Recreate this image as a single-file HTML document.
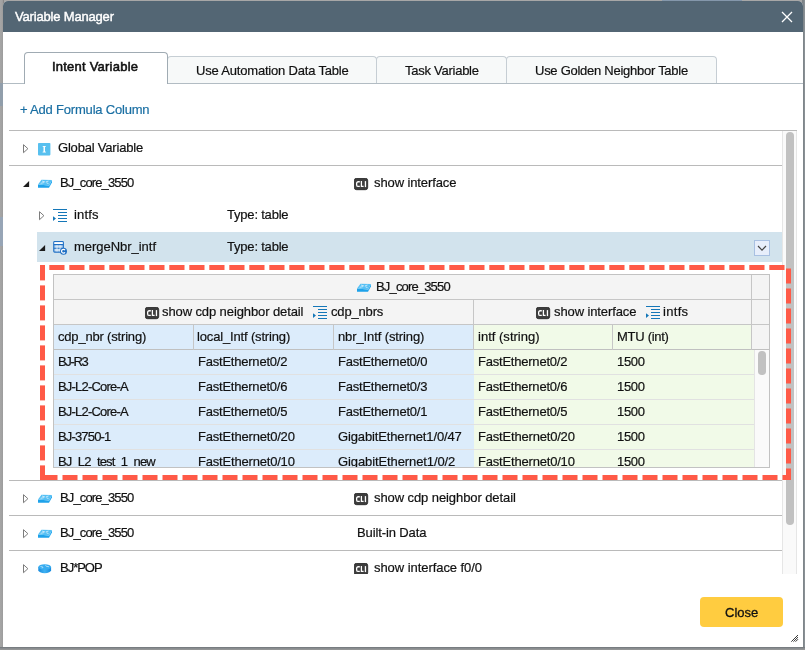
<!DOCTYPE html>
<html><head><meta charset="utf-8"><title>Variable Manager</title>
<style>
html,body{margin:0;padding:0}
body{width:805px;height:650px;overflow:hidden;position:relative;background:#8d9296;font-family:"Liberation Sans", sans-serif;font-size:13px}
.abs{position:absolute;display:block}
.t{position:absolute;white-space:pre;line-height:15px;font-size:13px;font-family:"Liberation Sans", sans-serif;-webkit-text-stroke:0.2px;will-change:transform}
.bgl{left:0;top:0;width:4px;height:650px;background:linear-gradient(90deg,#a6a6a6,#a0a0a0 60%,#7d7d7d)}
.bgb{left:0;top:647px;width:805px;height:3px;background:linear-gradient(180deg,#6e7478 0,#868a8d 40%,#9a9a9a 100%)}
.bgr{left:802px;top:0;width:3px;height:650px;background:linear-gradient(90deg,#787f84,#7f868b 50%,#8f9599)}
.bgt{left:0;top:0;width:805px;height:2px;background:#a7a7a7}
.dlg{left:3px;top:1px;width:800px;height:646px;background:#fff;border-radius:5px 5px 0 0;overflow:hidden}
.hdr{left:0;top:0;width:800px;height:30.5px;background:#536674}
.tabline{left:3px;top:83px;width:800px;height:1px;background:#b2bcc3}
.tab{top:56px;height:27px;background:#f7f9f9;border:1px solid #c6ced4;border-bottom:none;border-radius:4px 4px 0 0;box-sizing:border-box}
.tab.act{top:52px;height:32px;background:#fff;border-color:#a0abb3}
.hl{left:9px;height:1px;background:#bababa;width:773px}
.sel{left:37px;top:232px;width:745px;height:30px;background:#d2e3ed}
.track{left:782px;top:131px;width:15px;height:443px;background:#fafafa;box-sizing:border-box;border-left:1px solid #e6e6e6;border-right:1px solid #e6e6e6}
.thumb{left:786px;top:132px;width:8px;height:393px;background:#c1c1c1;border-radius:4px}
.btn{left:700px;top:597px;width:83px;height:30px;background:#ffcc40;border-radius:4px}
.dd{left:754px;top:240px;width:16px;height:16px;box-sizing:border-box;background:#e7eefb;border:1px solid #a8c0e2}
.clip{left:54px;top:450px;width:715px;height:17px;overflow:hidden}
.clip2{left:9px;top:551px;width:773px;height:23px;overflow:hidden}
/* table */
.tb{left:53px;top:274px;width:717px;height:194px;box-sizing:border-box;border:1px solid #c2c2c2;background:#f4f4f4;overflow:hidden}
</style></head>
<body>
<div class="abs bgt"></div><div class="abs" style="left:662px;top:0;width:80px;height:1px;background:#8497ab"></div><div class="abs bgl"></div><div class="abs" style="left:0;top:83px;width:3px;height:23px;background:#919eab"></div><div class="abs" style="left:0;top:217px;width:3px;height:29px;background:#97a5b6"></div><div class="abs bgr"></div><div class="abs bgb"></div>
<div class="abs dlg"><div class="abs hdr"></div></div>
<svg class="abs" style="left:781px;top:11px" width="12" height="12" viewBox="0 0 12 12"><path d="M1 1 L11 11 M11 1 L1 11" stroke="#fff" stroke-width="1.3" fill="none"/></svg>

<div class="abs tabline"></div>
<div class="abs tab" style="left:167px;width:210px"></div>
<div class="abs tab" style="left:376px;width:131px"></div>
<div class="abs tab" style="left:506px;width:211px"></div>
<div class="abs tab act" style="left:24px;width:144px"></div>

<div class="abs hl" style="top:130px;width:788px"></div>
<div class="abs hl" style="top:165px"></div>
<div class="abs sel"></div>
<div class="abs hl" style="top:480px"></div>
<div class="abs hl" style="top:515px"></div>
<div class="abs hl" style="top:550px"></div>
<div class="abs dd"><svg class="abs" style="left:2px;top:4px" width="10" height="7" viewBox="0 0 10 7"><path d="M1 1 L5 5.2 L9 1" fill="none" stroke="#444" stroke-width="1.15"/></svg></div>

<!-- inner table -->
<div class="abs tb">
  <div class="abs" style="left:0;top:24px;width:715px;height:1px;background:#c6c6c6"></div>
  <div class="abs" style="left:0;top:49px;width:715px;height:1px;background:#c6c6c6"></div>
  <div class="abs" style="left:0;top:50px;width:420px;height:143px;background:#dcecfb"></div>
  <div class="abs" style="left:420px;top:50px;width:277px;height:25px;background:#f1fae8"></div>
  <div class="abs" style="left:420px;top:75px;width:280px;height:118px;background:#f1fae8"></div>
  <div class="abs" style="left:700px;top:75px;width:15px;height:118px;background:#fafafa;border-left:1px solid #e4e4e4"></div>
  <div class="abs" style="left:0;top:74px;width:715px;height:1px;background:#c0c0c0"></div>
  <div class="abs" style="left:0;top:99px;width:700px;height:1px;background:#e1e1e1"></div>
  <div class="abs" style="left:0;top:124px;width:700px;height:1px;background:#e1e1e1"></div>
  <div class="abs" style="left:0;top:149px;width:700px;height:1px;background:#e1e1e1"></div>
  <div class="abs" style="left:0;top:174px;width:700px;height:1px;background:#e1e1e1"></div>
  <div class="abs" style="left:139px;top:50px;width:1px;height:25px;background:#c6c6c6"></div>
  <div class="abs" style="left:279px;top:50px;width:1px;height:25px;background:#c6c6c6"></div>
  <div class="abs" style="left:419px;top:25px;width:1px;height:50px;background:#c6c6c6"></div>
  <div class="abs" style="left:558px;top:50px;width:1px;height:25px;background:#c6c6c6"></div>
  <div class="abs" style="left:697px;top:0;width:1px;height:75px;background:#c6c6c6"></div>
  <div class="abs" style="left:704px;top:76px;width:7.6px;height:24px;background:#c1c1c1;border-radius:3.8px"></div>
</div>
<svg class='abs' style='left:355.8px;top:282.8px' width='16' height='10' viewBox='0 0 16 10'><path d='M1 5.4 L12 6.4 L12 8.8 L1 8.7 Z' fill='#1ea2ea'/><path d='M12 6.4 L15 1 L15 3.4 L12 8.8 Z' fill='#2aaaef'/><path d='M4.5 0.7 L15 1 L12 6.4 L1 5.4 Z' fill='#56c0f4'/><path d='M5 2 L8 3 M11.5 2 L8.8 3 M3.6 4.3 L7 3.6 M9.5 3.8 L11.5 4.6' stroke='#cdebfb' stroke-width='0.9'/></svg><svg class='abs' style='left:145px;top:306.8px' width='15' height='13' viewBox='0 0 15 13'><rect x='0.3' y='0.3' width='13.4' height='11.4' rx='2.3' fill='#3d3d3d' stroke='#1e1e1e' stroke-width='0.8'/><g fill='none' stroke='#fff' stroke-width='1.3'><path d='M5.8 3.75 H4.3 Q2.65 3.75 2.65 5.3 V6.9 Q2.65 8.45 4.3 8.45 H5.8'/><path d='M7.4 3.1 V8.45 H9.6'/><path d='M11.45 3.1 V9.1'/></g></svg><svg class='abs' style='left:313px;top:306px' width='15' height='14' viewBox='0 0 15 14' shape-rendering='crispEdges'><g fill='#1577b8'><rect x='0' y='0' width='14' height='1'/><rect x='5' y='3' width='9' height='1'/><rect x='5' y='6' width='9' height='1'/><rect x='5' y='9' width='9' height='1'/><rect x='5' y='12' width='9' height='1'/></g><path d='M0 7.2 L3 9.5 L0 11.9 Z' fill='#1577b8' shape-rendering='auto'/></svg><svg class='abs' style='left:536px;top:306.8px' width='15' height='13' viewBox='0 0 15 13'><rect x='0.3' y='0.3' width='13.4' height='11.4' rx='2.3' fill='#3d3d3d' stroke='#1e1e1e' stroke-width='0.8'/><g fill='none' stroke='#fff' stroke-width='1.3'><path d='M5.8 3.75 H4.3 Q2.65 3.75 2.65 5.3 V6.9 Q2.65 8.45 4.3 8.45 H5.8'/><path d='M7.4 3.1 V8.45 H9.6'/><path d='M11.45 3.1 V9.1'/></g></svg><svg class='abs' style='left:646px;top:306px' width='15' height='14' viewBox='0 0 15 14' shape-rendering='crispEdges'><g fill='#1577b8'><rect x='0' y='0' width='14' height='1'/><rect x='5' y='3' width='9' height='1'/><rect x='5' y='6' width='9' height='1'/><rect x='5' y='9' width='9' height='1'/><rect x='5' y='12' width='9' height='1'/></g><path d='M0 7.2 L3 9.5 L0 11.9 Z' fill='#1577b8' shape-rendering='auto'/></svg>
<span class='t' style='left:15.0px;top:9.0px;letter-spacing:-0.179px;color:#ffffff;-webkit-text-stroke:0.4px;'>Variable Manager</span>
<span class='t' style='left:52.2px;top:59.0px;letter-spacing:0.222px;color:#111;-webkit-text-stroke:0.55px;'>Intent Variable</span>
<span class='t' style='left:195.6px;top:62.8px;letter-spacing:-0.189px;color:#111111;'>Use Automation Data Table</span>
<span class='t' style='left:404.5px;top:62.8px;letter-spacing:-0.260px;color:#111111;'>Task Variable</span>
<span class='t' style='left:534.5px;top:62.8px;letter-spacing:-0.263px;color:#111111;'>Use Golden Neighbor Table</span>
<span class='t' style='left:20.3px;top:101.8px;letter-spacing:-0.196px;color:#1a6fa3;'>+ Add Formula Column</span>
<span class='t' style='left:57.6px;top:140.4px;letter-spacing:-0.201px;color:#111111;'>Global Variable</span>
<span class='t' style='left:60.1px;top:174.8px;letter-spacing:-0.870px;color:#111111;'>BJ_core_3550</span>
<span class='t' style='left:374.0px;top:175.2px;letter-spacing:-0.102px;color:#111111;'>show interface</span>
<span class='t' style='left:73.7px;top:207.0px;letter-spacing:0.191px;color:#111111;'>intfs</span>
<span class='t' style='left:226.5px;top:206.8px;letter-spacing:-0.201px;color:#111111;'>Type: table</span>
<span class='t' style='left:73.7px;top:238.6px;letter-spacing:-0.029px;color:#111111;'>mergeNbr_intf</span>
<span class='t' style='left:226.5px;top:238.5px;letter-spacing:-0.201px;color:#111111;'>Type: table</span>
<span class='t' style='left:375.6px;top:278.8px;letter-spacing:-0.837px;color:#111111;'>BJ_core_3550</span>
<span class='t' style='left:161.8px;top:304.0px;letter-spacing:-0.101px;color:#111111;'>show cdp neighbor detail</span>
<span class='t' style='left:330.5px;top:304.0px;letter-spacing:-0.161px;color:#111111;'>cdp_nbrs</span>
<span class='t' style='left:553.7px;top:304.0px;letter-spacing:-0.102px;color:#111111;'>show interface</span>
<span class='t' style='left:663.4px;top:304.0px;letter-spacing:0.311px;color:#111111;'>intfs</span>
<span class='t' style='left:57.8px;top:329.0px;letter-spacing:-0.184px;color:#111111;'>cdp_nbr (string)</span>
<span class='t' style='left:197.3px;top:329.0px;letter-spacing:-0.158px;color:#111111;'>local_Intf (string)</span>
<span class='t' style='left:337.9px;top:329.0px;letter-spacing:-0.109px;color:#111111;'>nbr_Intf (string)</span>
<span class='t' style='left:477.7px;top:329.0px;letter-spacing:0.015px;color:#111111;'>intf (string)</span>
<span class='t' style='left:617.1px;top:329.0px;letter-spacing:-0.286px;color:#111111;'>MTU (int)</span>
<span class='t' style='left:57.8px;top:353.8px;letter-spacing:-1.345px;color:#111111;'>BJ-R3</span>
<span class='t' style='left:197.7px;top:353.8px;letter-spacing:-0.220px;color:#111111;'>FastEthernet0/2</span>
<span class='t' style='left:337.7px;top:353.8px;letter-spacing:-0.220px;color:#111111;'>FastEthernet0/0</span>
<span class='t' style='left:477.5px;top:353.8px;letter-spacing:-0.220px;color:#111111;'>FastEthernet0/2</span>
<span class='t' style='left:616.5px;top:353.8px;letter-spacing:-0.330px;color:#111111;'>1500</span>
<span class='t' style='left:57.8px;top:378.8px;letter-spacing:-0.806px;color:#111111;'>BJ-L2-Core-A</span>
<span class='t' style='left:197.7px;top:378.8px;letter-spacing:-0.220px;color:#111111;'>FastEthernet0/6</span>
<span class='t' style='left:337.7px;top:378.8px;letter-spacing:-0.220px;color:#111111;'>FastEthernet0/3</span>
<span class='t' style='left:477.5px;top:378.8px;letter-spacing:-0.220px;color:#111111;'>FastEthernet0/6</span>
<span class='t' style='left:616.5px;top:378.8px;letter-spacing:-0.330px;color:#111111;'>1500</span>
<span class='t' style='left:57.8px;top:403.8px;letter-spacing:-0.806px;color:#111111;'>BJ-L2-Core-A</span>
<span class='t' style='left:197.7px;top:403.8px;letter-spacing:-0.220px;color:#111111;'>FastEthernet0/5</span>
<span class='t' style='left:337.7px;top:403.8px;letter-spacing:-0.220px;color:#111111;'>FastEthernet0/1</span>
<span class='t' style='left:477.5px;top:403.8px;letter-spacing:-0.220px;color:#111111;'>FastEthernet0/5</span>
<span class='t' style='left:616.5px;top:403.8px;letter-spacing:-0.330px;color:#111111;'>1500</span>
<span class='t' style='left:57.8px;top:428.8px;letter-spacing:-0.843px;color:#111111;'>BJ-3750-1</span>
<span class='t' style='left:197.7px;top:428.8px;letter-spacing:-0.190px;color:#111111;'>FastEthernet0/20</span>
<span class='t' style='left:337.7px;top:428.8px;letter-spacing:-0.133px;color:#111111;'>GigabitEthernet1/0/47</span>
<span class='t' style='left:477.5px;top:428.8px;letter-spacing:-0.190px;color:#111111;'>FastEthernet0/20</span>
<span class='t' style='left:616.5px;top:428.8px;letter-spacing:-0.330px;color:#111111;'>1500</span>
<span class='t' style='left:60.1px;top:490.0px;letter-spacing:-0.870px;color:#111111;'>BJ_core_3550</span>
<span class='t' style='left:374.0px;top:490.0px;letter-spacing:-0.085px;color:#111111;'>show cdp neighbor detail</span>
<span class='t' style='left:60.1px;top:525.0px;letter-spacing:-0.870px;color:#111111;'>BJ_core_3550</span>
<span class='t' style='left:357.3px;top:525.0px;letter-spacing:-0.116px;color:#111111;'>Built-in Data</span>
<svg class='abs' style='left:23px;top:143.8px' width='7' height='10' viewBox='0 0 7 10'><path d='M0.5 0.7 L4.9 4.7 L0.5 8.7 Z' fill='#fff' stroke='#757575' stroke-width='0.95'/></svg><svg class='abs' style='left:38px;top:142.7px' width='13' height='13' viewBox='0 0 13 13'><rect x='0' y='0' width='12.4' height='12.4' rx='0.8' fill='#58c0ef'/><path d='M4.6 2.9 H7.9 V3.6 L7 4 V8.4 L7.9 8.8 V9.5 H4.6 V8.8 L5.5 8.4 V4 L4.6 3.6 Z' fill='#fff'/></svg><svg class='abs' style='left:23px;top:181px' width='7' height='7' viewBox='0 0 7 7'><path d='M6.1 0 L6.1 6.1 L0 6.1 Z' fill='#1c1c1c'/></svg><svg class='abs' style='left:37px;top:178.9px' width='16' height='10' viewBox='0 0 16 10'><path d='M1 5.4 L12 6.4 L12 8.8 L1 8.7 Z' fill='#1ea2ea'/><path d='M12 6.4 L15 1 L15 3.4 L12 8.8 Z' fill='#2aaaef'/><path d='M4.5 0.7 L15 1 L12 6.4 L1 5.4 Z' fill='#56c0f4'/><path d='M5 2 L8 3 M11.5 2 L8.8 3 M3.6 4.3 L7 3.6 M9.5 3.8 L11.5 4.6' stroke='#cdebfb' stroke-width='0.9'/></svg><svg class='abs' style='left:353.7px;top:178px' width='15' height='13' viewBox='0 0 15 13'><rect x='0.3' y='0.3' width='13.4' height='11.4' rx='2.3' fill='#3d3d3d' stroke='#1e1e1e' stroke-width='0.8'/><g fill='none' stroke='#fff' stroke-width='1.3'><path d='M5.8 3.75 H4.3 Q2.65 3.75 2.65 5.3 V6.9 Q2.65 8.45 4.3 8.45 H5.8'/><path d='M7.4 3.1 V8.45 H9.6'/><path d='M11.45 3.1 V9.1'/></g></svg><svg class='abs' style='left:39.3px;top:211.3px' width='7' height='10' viewBox='0 0 7 10'><path d='M0.5 0.7 L4.9 4.7 L0.5 8.7 Z' fill='#fff' stroke='#757575' stroke-width='0.95'/></svg><svg class='abs' style='left:53px;top:209px' width='15' height='14' viewBox='0 0 15 14' shape-rendering='crispEdges'><g fill='#1577b8'><rect x='0' y='0' width='14' height='1'/><rect x='5' y='3' width='9' height='1'/><rect x='5' y='6' width='9' height='1'/><rect x='5' y='9' width='9' height='1'/><rect x='5' y='12' width='9' height='1'/></g><path d='M0 7.2 L3 9.5 L0 11.9 Z' fill='#1577b8' shape-rendering='auto'/></svg><svg class='abs' style='left:39px;top:244.7px' width='7' height='7' viewBox='0 0 7 7'><path d='M6.1 0 L6.1 6.1 L0 6.1 Z' fill='#1c1c1c'/></svg><svg class='abs' style='left:52px;top:240px' width='17' height='16' viewBox='0 0 17 16'><rect x='1.8' y='1.6' width='9.5' height='10.5' rx='0.8' fill='#c6ddf2' stroke='#1f6fc4' stroke-width='1.2'/><rect x='2.4' y='2.2' width='8.3' height='1.8' fill='#fff'/><path d='M1.8 4.6 H11.3 M1.8 8.3 H11.3' stroke='#1f6fc4' stroke-width='1.1'/><path d='M5 5.2 V11.5 M8.1 5.2 V11.5' stroke='#eef5fb' stroke-width='0.8'/><circle cx='11.5' cy='11.2' r='3.5' fill='#1f6fc4'/><path d='M13 10.1 A1.9 1.9 0 1 0 13 12.3' fill='none' stroke='#fff' stroke-width='1.2'/></svg><svg class='abs' style='left:23px;top:494px' width='7' height='10' viewBox='0 0 7 10'><path d='M0.5 0.7 L4.9 4.7 L0.5 8.7 Z' fill='#fff' stroke='#757575' stroke-width='0.95'/></svg><svg class='abs' style='left:37px;top:493.5px' width='16' height='10' viewBox='0 0 16 10'><path d='M1 5.4 L12 6.4 L12 8.8 L1 8.7 Z' fill='#1ea2ea'/><path d='M12 6.4 L15 1 L15 3.4 L12 8.8 Z' fill='#2aaaef'/><path d='M4.5 0.7 L15 1 L12 6.4 L1 5.4 Z' fill='#56c0f4'/><path d='M5 2 L8 3 M11.5 2 L8.8 3 M3.6 4.3 L7 3.6 M9.5 3.8 L11.5 4.6' stroke='#cdebfb' stroke-width='0.9'/></svg><svg class='abs' style='left:353.7px;top:493.2px' width='15' height='13' viewBox='0 0 15 13'><rect x='0.3' y='0.3' width='13.4' height='11.4' rx='2.3' fill='#3d3d3d' stroke='#1e1e1e' stroke-width='0.8'/><g fill='none' stroke='#fff' stroke-width='1.3'><path d='M5.8 3.75 H4.3 Q2.65 3.75 2.65 5.3 V6.9 Q2.65 8.45 4.3 8.45 H5.8'/><path d='M7.4 3.1 V8.45 H9.6'/><path d='M11.45 3.1 V9.1'/></g></svg><svg class='abs' style='left:23px;top:529px' width='7' height='10' viewBox='0 0 7 10'><path d='M0.5 0.7 L4.9 4.7 L0.5 8.7 Z' fill='#fff' stroke='#757575' stroke-width='0.95'/></svg><svg class='abs' style='left:37px;top:528.5px' width='16' height='10' viewBox='0 0 16 10'><path d='M1 5.4 L12 6.4 L12 8.8 L1 8.7 Z' fill='#1ea2ea'/><path d='M12 6.4 L15 1 L15 3.4 L12 8.8 Z' fill='#2aaaef'/><path d='M4.5 0.7 L15 1 L12 6.4 L1 5.4 Z' fill='#56c0f4'/><path d='M5 2 L8 3 M11.5 2 L8.8 3 M3.6 4.3 L7 3.6 M9.5 3.8 L11.5 4.6' stroke='#cdebfb' stroke-width='0.9'/></svg>
<div class="abs clip"><div class="abs" style="left:-54px;top:-450px"><span class='t' style='left:57.8px;top:453.8px;letter-spacing:-0.862px;color:#111111;'>BJ_L2_test_1_new</span>
<span class='t' style='left:197.7px;top:453.8px;letter-spacing:-0.190px;color:#111111;'>FastEthernet0/10</span>
<span class='t' style='left:337.7px;top:453.8px;letter-spacing:-0.102px;color:#111111;'>GigabitEthernet1/0/2</span>
<span class='t' style='left:477.5px;top:453.8px;letter-spacing:-0.190px;color:#111111;'>FastEthernet0/10</span>
<span class='t' style='left:616.5px;top:453.8px;letter-spacing:-0.330px;color:#111111;'>1500</span></div></div>
<div class="abs clip2"><div class="abs" style="left:-9px;top:-551px"><span class='t' style='left:60.1px;top:560.0px;letter-spacing:-1.015px;color:#111111;'>BJ*POP</span>
<span class='t' style='left:374.0px;top:560.0px;letter-spacing:-0.059px;color:#111111;'>show interface f0/0</span><svg class='abs' style='left:23px;top:564px' width='7' height='10' viewBox='0 0 7 10'><path d='M0.5 0.7 L4.9 4.7 L0.5 8.7 Z' fill='#fff' stroke='#757575' stroke-width='0.95'/></svg><svg class='abs' style='left:38px;top:563.6px' width='14' height='10' viewBox='0 0 14 10'><defs><linearGradient id='rg' x1='0' y1='0' x2='1' y2='0'><stop offset='0' stop-color='#168ade'/><stop offset='0.5' stop-color='#3fb2f2'/><stop offset='1' stop-color='#168ade'/></linearGradient></defs><path d='M0.3 3 V6.3 A6.4 2.9 0 0 0 13.1 6.3 V3 Z' fill='url(#rg)'/><ellipse cx='6.7' cy='3' rx='6.4' ry='2.8' fill='#38adf0'/><path d='M2.5 2.5 L5 3.2 L4.2 4.3 M7.5 1.2 L8.3 2.3 L11 2.8' stroke='#c9e9fb' stroke-width='0.8' fill='none'/></svg><svg class='abs' style='left:353.7px;top:563.2px' width='15' height='13' viewBox='0 0 15 13'><rect x='0.3' y='0.3' width='13.4' height='11.4' rx='2.3' fill='#3d3d3d' stroke='#1e1e1e' stroke-width='0.8'/><g fill='none' stroke='#fff' stroke-width='1.3'><path d='M5.8 3.75 H4.3 Q2.65 3.75 2.65 5.3 V6.9 Q2.65 8.45 4.3 8.45 H5.8'/><path d='M7.4 3.1 V8.45 H9.6'/><path d='M11.45 3.1 V9.1'/></g></svg></div></div>

<div class="abs track"></div>
<div class="abs thumb"></div>
<svg class='abs' style='left:0;top:0' width='805' height='650' fill='#ff5a47'><rect x='40' y='265' width='5' height='5'/><rect x='49.3' y='265' width='15.200000000000003' height='5'/><rect x='69.3' y='265' width='15.200000000000003' height='5'/><rect x='89.3' y='265' width='15.200000000000003' height='5'/><rect x='109.3' y='265' width='15.200000000000003' height='5'/><rect x='129.3' y='265' width='15.199999999999989' height='5'/><rect x='149.3' y='265' width='15.199999999999989' height='5'/><rect x='169.3' y='265' width='15.199999999999989' height='5'/><rect x='189.3' y='265' width='15.199999999999989' height='5'/><rect x='209.3' y='265' width='15.199999999999989' height='5'/><rect x='229.3' y='265' width='15.199999999999989' height='5'/><rect x='249.3' y='265' width='15.199999999999989' height='5'/><rect x='269.3' y='265' width='15.199999999999989' height='5'/><rect x='289.3' y='265' width='15.199999999999989' height='5'/><rect x='309.3' y='265' width='15.199999999999989' height='5'/><rect x='329.3' y='265' width='15.199999999999989' height='5'/><rect x='349.3' y='265' width='15.199999999999989' height='5'/><rect x='369.3' y='265' width='15.199999999999989' height='5'/><rect x='389.3' y='265' width='15.199999999999989' height='5'/><rect x='409.3' y='265' width='15.199999999999989' height='5'/><rect x='429.3' y='265' width='15.199999999999989' height='5'/><rect x='449.3' y='265' width='15.199999999999989' height='5'/><rect x='469.3' y='265' width='15.199999999999989' height='5'/><rect x='489.3' y='265' width='15.199999999999989' height='5'/><rect x='509.3' y='265' width='15.199999999999989' height='5'/><rect x='529.3' y='265' width='15.200000000000045' height='5'/><rect x='549.3' y='265' width='15.200000000000045' height='5'/><rect x='569.3' y='265' width='15.200000000000045' height='5'/><rect x='589.3' y='265' width='15.200000000000045' height='5'/><rect x='609.3' y='265' width='15.200000000000045' height='5'/><rect x='629.3' y='265' width='15.200000000000045' height='5'/><rect x='649.3' y='265' width='15.200000000000045' height='5'/><rect x='669.3' y='265' width='15.200000000000045' height='5'/><rect x='689.3' y='265' width='15.200000000000045' height='5'/><rect x='709.3' y='265' width='15.200000000000045' height='5'/><rect x='729.3' y='265' width='15.200000000000045' height='5'/><rect x='749.3' y='265' width='15.200000000000045' height='5'/><rect x='769.3' y='265' width='15.200000000000045' height='5'/><rect x='786' y='268.5' width='5' height='15.0'/><rect x='786' y='288.5' width='5' height='15.0'/><rect x='786' y='308.5' width='5' height='15.0'/><rect x='786' y='328.5' width='5' height='15.0'/><rect x='786' y='348.5' width='5' height='15.0'/><rect x='786' y='368.5' width='5' height='15.0'/><rect x='786' y='388.5' width='5' height='15.0'/><rect x='786' y='408.5' width='5' height='15.0'/><rect x='786' y='428.5' width='5' height='15.0'/><rect x='786' y='448.5' width='5' height='15.0'/><rect x='786' y='468.5' width='5' height='11.5'/><rect x='782.5' y='475' width='8.5' height='5'/><rect x='762.5' y='475' width='15.0' height='5'/><rect x='742.5' y='475' width='15.0' height='5'/><rect x='722.5' y='475' width='15.0' height='5'/><rect x='702.5' y='475' width='15.0' height='5'/><rect x='682.5' y='475' width='15.0' height='5'/><rect x='662.5' y='475' width='15.0' height='5'/><rect x='642.5' y='475' width='15.0' height='5'/><rect x='622.5' y='475' width='15.0' height='5'/><rect x='602.5' y='475' width='15.0' height='5'/><rect x='582.5' y='475' width='15.0' height='5'/><rect x='562.5' y='475' width='15.0' height='5'/><rect x='542.5' y='475' width='15.0' height='5'/><rect x='522.5' y='475' width='15.0' height='5'/><rect x='502.5' y='475' width='15.0' height='5'/><rect x='482.5' y='475' width='15.0' height='5'/><rect x='462.5' y='475' width='15.0' height='5'/><rect x='442.5' y='475' width='15.0' height='5'/><rect x='422.5' y='475' width='15.0' height='5'/><rect x='402.5' y='475' width='15.0' height='5'/><rect x='382.5' y='475' width='15.0' height='5'/><rect x='362.5' y='475' width='15.0' height='5'/><rect x='342.5' y='475' width='15.0' height='5'/><rect x='322.5' y='475' width='15.0' height='5'/><rect x='302.5' y='475' width='15.0' height='5'/><rect x='282.5' y='475' width='15.0' height='5'/><rect x='262.5' y='475' width='15.0' height='5'/><rect x='242.5' y='475' width='15.0' height='5'/><rect x='222.5' y='475' width='15.0' height='5'/><rect x='202.5' y='475' width='15.0' height='5'/><rect x='182.5' y='475' width='15.0' height='5'/><rect x='162.5' y='475' width='15.0' height='5'/><rect x='142.5' y='475' width='15.0' height='5'/><rect x='122.5' y='475' width='15.0' height='5'/><rect x='102.5' y='475' width='15.0' height='5'/><rect x='82.5' y='475' width='15.0' height='5'/><rect x='62.5' y='475' width='15.0' height='5'/><rect x='40' y='475' width='17.5' height='5'/><rect x='40' y='265' width='5' height='15.399999999999977'/><rect x='40' y='285.4' width='5' height='15.0'/><rect x='40' y='305.4' width='5' height='15.0'/><rect x='40' y='325.4' width='5' height='15.0'/><rect x='40' y='345.4' width='5' height='15.0'/><rect x='40' y='365.4' width='5' height='15.0'/><rect x='40' y='385.4' width='5' height='15.0'/><rect x='40' y='405.4' width='5' height='15.0'/><rect x='40' y='425.4' width='5' height='15.0'/><rect x='40' y='445.4' width='5' height='15.0'/><rect x='40' y='465.4' width='5' height='14.600000000000023'/></svg>
<div class="abs btn"></div>
<span class='t' style='left:724.7px;top:604.6px;letter-spacing:0.010px;color:#111;-webkit-text-stroke:0.3px;'>Close</span>
<svg class="abs" style="left:790px;top:634px" width="9" height="9" viewBox="0 0 9 9"><path d="M8 1 L1.3 7.7 M8 3.1 L3.4 7.7 M8 5.2 L5.5 7.7" stroke="#3a3a3a" stroke-width="1" fill="none"/></svg>
</body></html>
